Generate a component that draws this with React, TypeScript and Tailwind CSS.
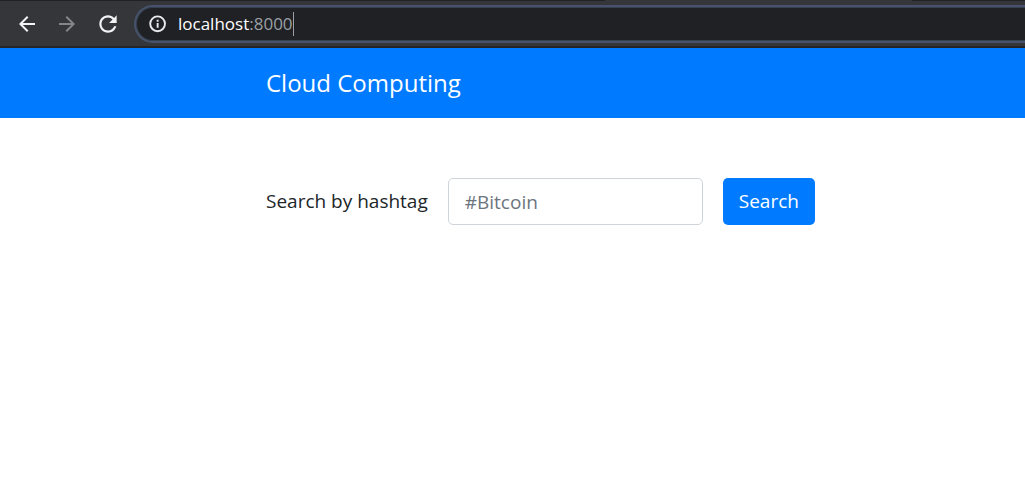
import React from "react";

function Glyph({ d, className }: { d: string; className: string }) {
  return (
    <svg viewBox="0 0 24 24" fill="currentColor" aria-hidden="true" className={className}>
      <path d={d} />
    </svg>
  );
}

const BACK = "M20 11H7.83l5.59-5.59L12 4l-8 8 8 8 1.41-1.41L7.83 13H20v-2z";
const FORWARD = "M12 4l-1.41 1.41L16.17 11H4v2h12.17l-5.58 5.59L12 20l8-8z";
const RELOAD =
  "M17.65 6.35C16.2 4.9 14.21 4 12 4c-4.42 0-7.99 3.58-7.99 8s3.57 8 7.99 8c3.73 0 6.84-2.55 7.73-6h-2.08c-.82 2.33-3.04 4-5.65 4-3.31 0-6-2.69-6-6s2.69-6 6-6c1.66 0 3.14.69 4.22 1.78L13 11h7V4l-2.35 2.35z";

function InfoIcon() {
  return (
    <svg viewBox="0 0 20 20" aria-hidden="true" className="size-5">
      <circle cx="9.6" cy="9.8" r="7.4" fill="none" stroke="currentColor" strokeWidth="1.9" />
      <path d="M8.7 9h1.9v4.8H8.7zM8.7 5.8h1.9v2H8.7z" fill="currentColor" />
    </svg>
  );
}

function BrowserBar() {
  return (
    <div className="border-b-2 border-[#252528] bg-[#35363a]">
      <div className="flex h-px justify-between">
        <div className="w-[59%] bg-[#202124]" />
        <div className="w-[11%] bg-[#202124]" />
      </div>
      <div className="flex items-center pt-1 pb-[3px] pl-[15px]">
        <div className="flex items-center gap-4 text-[#f1f3f4]">
          <button type="button" aria-label="Back">
            <Glyph d={BACK} className="size-6" />
          </button>
          <button type="button" aria-label="Forward" disabled className="text-[#85868a]">
            <Glyph d={FORWARD} className="size-6" />
          </button>
          <button type="button" aria-label="Reload">
            <Glyph d={RELOAD} className="size-[26px]" />
          </button>
        </div>
        <div className="ml-[13px] flex h-[38px] flex-1 items-center rounded-l-full border-y-2 border-l-2 border-[#46536b] bg-[#202124] pl-3 shadow-[inset_1px_0_0_#364050,inset_0_1px_0_#364050,inset_0_-1px_0_#364050]">
          <button type="button" aria-label="Site information" className="text-[#e8eaed]">
            <InfoIcon />
          </button>
          <div className="ml-[10px] flex items-center text-[17px] leading-6 text-white">
            <span>localhost</span>
            <span className="text-[#9aa0a6]">:8000</span>
            <span className="h-6 w-px bg-[#9aa0a6]" />
          </div>
        </div>
      </div>
    </div>
  );
}

export default function App() {
  return (
    <div className="min-h-screen bg-white font-['Open_Sans','Noto_Sans',sans-serif] text-[#212529]">
      <BrowserBar />
      <header className="bg-[#007bff] py-[17px] pl-[266px]">
        <a href="#" className="block text-2xl leading-9 text-white">
          Cloud Computing
        </a>
      </header>
      <main className="pt-[60px] pl-[266px]">
        <form className="flex items-center gap-5 text-[19px]" onSubmit={(e) => e.preventDefault()}>
          <label htmlFor="hashtag">Search by hashtag</label>
          <input
            id="hashtag"
            type="text"
            placeholder="#Bitcoin"
            className="h-[47px] w-[255px] rounded-[5px] border border-[#ced4da] bg-white px-4 placeholder:text-[#6c757d]"
          />
          <button type="submit" className="h-[47px] rounded-[5px] bg-[#007bff] px-4 text-white">
            Search
          </button>
        </form>
      </main>
    </div>
  );
}
